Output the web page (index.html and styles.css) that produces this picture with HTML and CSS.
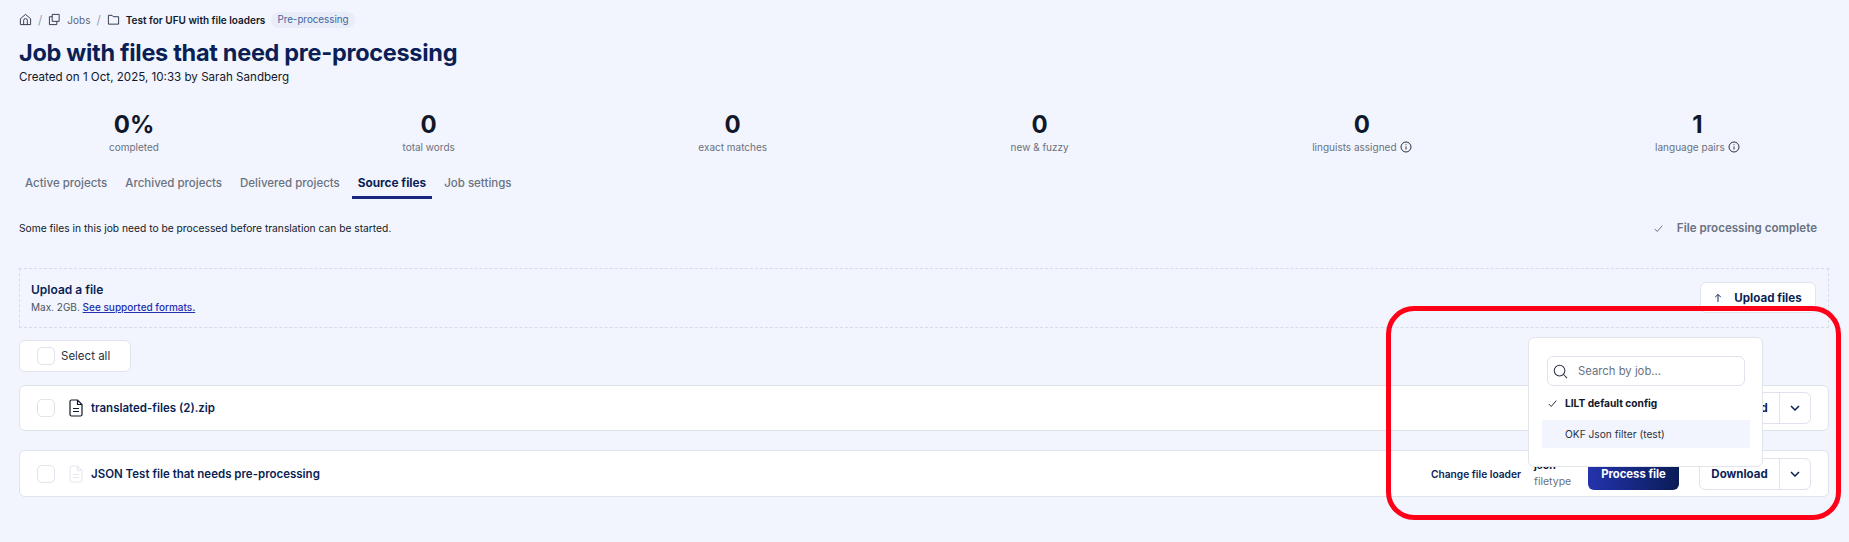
FILE: index.html
```html
<!DOCTYPE html>
<html lang="en">
<head>
<meta charset="utf-8">
<title>Job with files that need pre-processing</title>
<link rel="stylesheet" href="styles.css">
</head>
<body>
<main class="page">
  <nav class="crumbs">
    <svg class="ci" viewBox="0 0 14 14"><path d="M1.5 6.2 7 1.5l5.5 4.7v6.3h-11zM5 12.5V8a2 2 0 0 1 4 0v4.5"/></svg>
    <span class="sep">/</span>
    <svg class="ci" viewBox="0 0 14 14"><path d="M4.5 1.5h7.5v7.5H4.500zM4.500 4H1.500v8.500H9.500V9"/></svg>
    <span class="crumb">Jobs</span>
    <span class="sep">/</span>
    <svg class="ci" viewBox="0 0 14 14"><path d="M1.500 2.500h4l1.200 1.500h5.800v8H1.500z"/></svg>
    <strong class="crumb-current">Test for UFU with file loaders</strong>
    <span class="pill">Pre-processing</span>
  </nav>
  <h1 class="title">Job with files that need pre-processing</h1>
  <p class="created">Created on 1 Oct, 2025, 10:33 by Sarah Sandberg</p>

  <section class="stats">
    <div class="stat"><div class="num">0%</div><div class="lab">completed</div></div>
    <div class="stat"><div class="num">0</div><div class="lab">total words</div></div>
    <div class="stat"><div class="num">0</div><div class="lab">exact matches</div></div>
    <div class="stat"><div class="num">0</div><div class="lab">new &amp; fuzzy</div></div>
    <div class="stat"><div class="num">0</div><div class="lab">linguists assigned <svg class="info" viewBox="0 0 12 12"><circle cx="6" cy="6" r="5"/><path d="M6 5.500v3M6 3.300v1"/></svg></div></div>
    <div class="stat"><div class="num">1</div><div class="lab">language pairs <svg class="info" viewBox="0 0 12 12"><circle cx="6" cy="6" r="5"/><path d="M6 5.500v3M6 3.300v1"/></svg></div></div>
  </section>

  <div class="tabs">
    <a class="tab">Active projects</a>
    <a class="tab">Archived projects</a>
    <a class="tab">Delivered projects</a>
    <a class="tab active">Source files</a>
    <a class="tab">Job settings</a>
  </div>

  <div class="notice">
    <span>Some files in this job need to be processed before translation can be started.</span>
    <span class="complete"><svg class="tick" viewBox="0 0 10 10"><path d="M.8 5.500 3.600 8.300 9.200 1.800"/></svg>File processing complete</span>
  </div>

  <section class="upload">
    <div>
      <div class="up-title">Upload a file</div>
      <div class="up-sub">Max. 2GB. <a class="up-link">See supported formats.</a></div>
    </div>
    <button class="btn up-btn"><svg class="arrow" viewBox="0 0 10 12"><path d="M5 11V1.500M1.500 5 5 1.500 8.500 5"/></svg>Upload files</button>
  </section>

  <div class="select-all"><span class="check"></span>Select all</div>

  <div class="file file-a">
    <span class="check"></span>
    <svg class="doc" viewBox="0 0 14 18"><path d="M1 2.500A1.500 1.500 0 0 1 2.500 1H8.500L13 5.500v10a1.500 1.500 0 0 1-1.500 1.500h-9A1.500 1.500 0 0 1 1 15.500zM8.500 1v4.500H13M4 9.500h6M4 12.500h6"/></svg>
    <span class="fname">translated-files (2).zip</span>
    <div class="split">
      <span class="split-main">Download</span>
      <span class="split-caret"><svg class="caret" viewBox="0 0 10 6"><path d="M1 1l4 4 4-4"/></svg></span>
    </div>
  </div>

  <div class="file file-b">
    <span class="check"></span>
    <svg class="doc faded" viewBox="0 0 14 18"><path d="M1 2.500A1.500 1.500 0 0 1 2.500 1H8.500L13 5.500v10a1.500 1.500 0 0 1-1.500 1.500h-9A1.500 1.500 0 0 1 1 15.500zM8.500 1v4.500H13M4 9.500h6M4 12.500h6"/></svg>
    <span class="fname">JSON Test file that needs pre-processing</span>
    <a class="change">Change file loader</a>
    <div class="ftype"><div class="ft-val">json</div><div class="ft-lab">filetype</div></div>
    <button class="process">Process file</button>
    <div class="split">
      <span class="split-main">Download</span>
      <span class="split-caret"><svg class="caret" viewBox="0 0 10 6"><path d="M1 1l4 4 4-4"/></svg></span>
    </div>
  </div>
</main>

<div class="popover">
  <div class="search">
    <svg class="lens" viewBox="0 0 16 16"><circle cx="7" cy="7" r="5.700"/><path d="m11.200 11.200 3.800 3.800"/></svg>
    <span>Search by job...</span>
  </div>
  <div class="opt opt-on"><svg class="tick dark" viewBox="0 0 10 10"><path d="M.8 5.500 3.600 8.300 9.200 1.800"/></svg>LILT default config</div>
  <div class="opt opt-hover">OKF Json filter (test)</div>
</div>

<div class="annotation"></div>
</body>
</html>
```
FILE: styles.css
```css
* { box-sizing: border-box; }
html, body { margin: 0; height: 542px; overflow: hidden; }
body {
  position: relative;
  background: #f2f5fd;
  font-family: Inter, "Noto Sans", sans-serif;
  color: #11182a;
}
.page { padding: 11px 20px 0 19px; }

.crumbs { display: flex; align-items: center; height: 17px; font-size: 10px; }
.ci { width: 13px; height: 13px; fill: none; stroke: #2b3240; stroke-width: 1; flex: none; }
.sep { color: #9aa1ae; margin: 0 6px; font-size: 12px; }
.crumb { color: #5d6574; margin-left: 6px; }
.crumb-current { color: #11182a; font-weight: 600; margin-left: 6px; }
.pill {
  margin-left: 6px; padding: 0 6px; height: 16px; line-height: 15px; font-size: 9.800px;
  border-radius: 8px; background: #e9edf8; color: #41659f;
}

.title { margin: 10px 0 0; font-size: 23.500px; line-height: 30px; font-weight: 700; color: #0b1f56; letter-spacing: -.3px; }
.created { margin: 2px 0 0; font-size: 11.600px; line-height: 14px; color: #11182a; }

.stats { display: flex; gap: 243.500px; padding-left: 90px; margin-top: 28px; }
.stat { display: flex; flex-direction: column; align-items: center; }
.num { font-size: 24px; line-height: 26px; font-weight: 700; color: #11182a; }
.lab { display: flex; align-items: center; gap: 3px; margin-top: 2px; font-size: 10px; line-height: 14px; color: #6a7180; white-space: nowrap; }
.info { width: 12px; height: 12px; fill: none; stroke: #2b3240; stroke-width: 1; }

.tabs { display: flex; gap: 6px; margin: 16px 0 0 0; height: 29px; }
.tab { padding: 5px 6px 0; font-size: 11.500px; line-height: 16px; font-weight: 500; color: #6a7180; border-bottom: 3px solid transparent; }
.tab.active { color: #0b1f56; font-weight: 700; font-size: 11.800px; border-bottom-color: #17267f; }

.notice { display: flex; justify-content: space-between; align-items: center; margin-top: 21px; padding-right: 12px; font-size: 10.250px; line-height: 16px; }
.complete { display: flex; align-items: center; font-size: 11.600px; font-weight: 600; color: #6a7180; }
.tick { width: 9px; height: 9px; fill: none; stroke: #5d6574; stroke-width: 1; margin-right: 14px; }
.tick.dark { stroke: #11182a; margin-right: 8px; }

.upload {
  display: flex; justify-content: space-between; align-items: center;
  margin-top: 32px; height: 60px; padding: 0 12px 0 11px;
  border: 1px dashed #d6dbe6; 
}
.up-title { font-size: 12px; line-height: 16px; font-weight: 600; color: #0b1f56; }
.up-sub { margin-top: 2px; font-size: 10px; line-height: 14px; color: #4c5360; }
.up-link { color: #2430b0; font-weight: 500; text-decoration: underline; }
.btn {
  display: flex; align-items: center; justify-content: center;
  font: inherit; background: #fff; border: 1px solid #dfe3ec; border-radius: 6px;
}
.up-btn { width: 116px; height: 31px; font-size: 11.600px; font-weight: 700; color: #0b1f56; margin-top: -1px; }
.arrow { width: 8px; height: 10px; fill: none; stroke: #0b1f56; stroke-width: 1.200; margin-right: 12px; }

.select-all {
  display: flex; align-items: center; gap: 6px;
  width: 112px; height: 32px; margin-top: 12px; padding-left: 17px;
  background: #fff; border: 1px solid #dfe3ec; border-radius: 6px;
  font-size: 11.500px; color: #2b3240;
}
.check { display: block; width: 18px; height: 18px; flex: none; background: #fff; border: 1px solid #dfe3ec; border-radius: 5px; }

.file {
  display: flex; align-items: center;
  padding: 0 17px 0 17px;
  background: #fff; border: 1px solid #dfe3ec; border-radius: 6px;
}
.file-a { height: 46px; margin-top: 13px; }
.file-b { height: 47px; margin-top: 19px; }
.doc { width: 14px; height: 18px; margin-left: 14px; flex: none; fill: none; stroke: #11182a; stroke-width: 1.200; }
.doc.faded { stroke: #e6e9f0; }
.fname { margin-left: 8px; font-size: 11.500px; font-weight: 600; color: #0b1f56; }
.change { margin-left: auto; font-size: 10.200px; font-weight: 600; color: #0b1f56; }
.ftype { margin-left: 13px; width: 54px; font-size: 10.500px; line-height: 14px; }
.ft-val { font-weight: 700; color: #11182a; }
.ft-lab { color: #6a7180; margin-top: 2px; }
.process {
  width: 91px; height: 33px; margin-right: 20px;
  font: inherit; font-size: 11.300px; font-weight: 700; color: #fff;
  border: 0; border-radius: 6px;
  background: linear-gradient(90deg, #2433ad, #0a1c56);
}
.split {
  display: flex; width: 112px; height: 32px; margin-left: auto;
  border: 1px solid #dfe3ec; border-radius: 6px; background: #fff;
}
.process + .split { margin-left: 0; }
.split-main {
  width: 80px; display: flex; align-items: center; justify-content: center;
  font-size: 11.500px; font-weight: 700; color: #0b1f56;
  border-right: 1px solid #dfe3ec;
}
.split-caret { flex: 1; display: flex; align-items: center; justify-content: center; }
.caret { width: 10px; height: 6px; fill: none; stroke: #0b1f56; stroke-width: 1.500; }

.popover {
  position: absolute; left: 1528px; top: 337px; width: 235px; height: 130px;
  padding: 18px 12px 0 13px;
  background: #fff; border: 1px solid #e1e4eb; border-radius: 6px;
}
.search {
  display: flex; align-items: center; gap: 10px;
  width: 198px; height: 30px; margin-left: 5px; padding-left: 5px;
  border: 1px solid #dfe3ec; border-radius: 6px;
  font-size: 11.300px; color: #6a7180;
}
.lens { width: 15px; height: 15px; fill: none; stroke: #2b3240; stroke-width: 1.100; }
.opt { display: flex; align-items: center; height: 28px; padding-left: 23px; font-size: 10.200px; color: #2b3240; }
.opt-on { margin: 3px 0; padding-left: 6px; font-weight: 700; color: #11182a; }
.opt-hover { background: #f2f5fd; }

.annotation {
  position: absolute; left: 1386px; top: 306px; width: 455px; height: 214px;
  border: 5px solid #ff0018; border-radius: 28px; pointer-events: none;
}
```
